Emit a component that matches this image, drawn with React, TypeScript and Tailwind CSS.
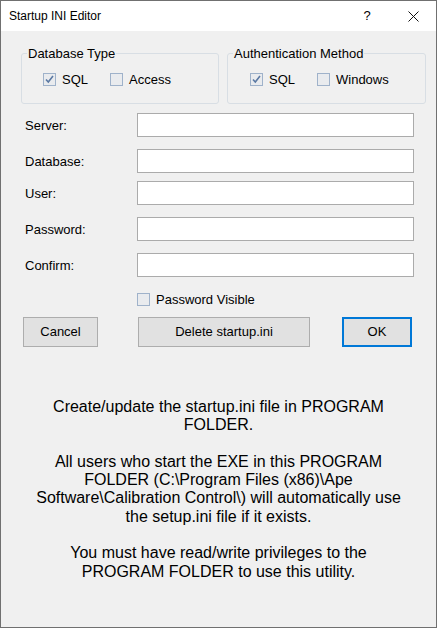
import React from "react";

function Check({ checked }: { checked?: boolean }) {
  return (
    <span className="w-[13px] h-[13px] shrink-0 border border-[#9fb2ca] bg-[#e9ebee] flex items-center justify-center">
      {checked && (
        <svg width="11" height="11" viewBox="0 0 11 11">
          <path d="M2 5.5 L4.3 8 L9 2" fill="none" stroke="#5b79a3" strokeWidth="1.6" />
        </svg>
      )}
    </span>
  );
}

function CheckItem({ label, checked, w }: { label: string; checked?: boolean; w?: string }) {
  return (
    <div className={`flex items-center gap-[6px] h-[15px] ${w ?? ""}`}>
      <Check checked={checked} />
      <span className="text-[13px] leading-[15px]">{label}</span>
    </div>
  );
}

function Field({ label, mt }: { label: string; mt: string }) {
  return (
    <div className={`flex items-center h-[24px] pl-[24px] ${mt}`}>
      <span className="w-[112px] text-[13px] leading-[15px]">{label}</span>
      <div className="w-[277px] h-[24px] bg-white border border-[#ababab]" />
    </div>
  );
}

export default function App() {
  return (
    <div className="w-[437px] h-[628px] bg-[#f0f0f0] border border-[#707070] flex flex-col font-['Liberation_Sans',Arial,sans-serif] text-black overflow-hidden">
      <div className="h-[30px] bg-white flex items-center shrink-0">
        <span className="pl-[8px] text-[12px] leading-[14px] flex-1">Startup INI Editor</span>
        <div className="w-[46px] h-full flex items-center justify-center text-[13px]">?</div>
        <div className="w-[46px] h-full flex items-center justify-center">
          <svg width="11" height="11" viewBox="0 0 11 11">
            <path d="M0.5 0.5 L10.5 10.5 M10.5 0.5 L0.5 10.5" stroke="#111" strokeWidth="1" />
          </svg>
        </div>
      </div>

      <div className="flex pl-[20px] mt-[15px] gap-[8px]">
        <fieldset className="w-[198px] border border-[#d8dee4] rounded-[3px] px-[5px] pb-[16px]">
          <legend className="px-[1px] text-[13px] leading-[15px]">Database Type</legend>
          <div className="flex mt-[11px] pl-[16px]">
            <CheckItem label="SQL" checked w="w-[67px]" />
            <CheckItem label="Access" />
          </div>
        </fieldset>
        <fieldset className="w-[199px] border border-[#d8dee4] rounded-[3px] px-[5px] pb-[16px]">
          <legend className="px-[1px] text-[13px] leading-[15px]">Authentication Method</legend>
          <div className="flex mt-[11px] pl-[17px]">
            <CheckItem label="SQL" checked w="w-[67px]" />
            <CheckItem label="Windows" />
          </div>
        </fieldset>
      </div>

      <Field label="Server:" mt="mt-[9px]" />
      <Field label="Database:" mt="mt-[12px]" />
      <Field label="User:" mt="mt-[8px]" />
      <Field label="Password:" mt="mt-[12px]" />
      <Field label="Confirm:" mt="mt-[12px]" />

      <div className="flex items-center h-[13px] pl-[136px] mt-[16px]">
        <CheckItem label="Password Visible" />
      </div>

      <div className="flex mt-[11px]">
        <button className="ml-[22px] w-[75px] h-[30px] bg-[#e1e1e1] border border-[#adadad] text-[13px]">Cancel</button>
        <button className="ml-[40px] w-[172px] h-[30px] bg-[#e1e1e1] border border-[#adadad] text-[13px]">Delete startup.ini</button>
        <button className="ml-[32px] w-[70px] h-[30px] bg-[#e1e1e1] border-2 border-[#0078d7] text-[13px]">OK</button>
      </div>

      <div className="mt-[51px] text-center text-[16px] leading-[18.3px] whitespace-nowrap">
        <p>Create/update the startup.ini file in PROGRAM<br />FOLDER.</p>
        <p className="mt-[18.3px]">
          All users who start the EXE in this PROGRAM<br />
          FOLDER (C:\Program Files (x86)\Ape<br />
          Software\Calibration Control\) will automatically use<br />
          the setup.ini file if it exists.
        </p>
        <p className="mt-[18.3px]">
          You must have read/write privileges to the<br />
          PROGRAM FOLDER to use this utility.
        </p>
      </div>
    </div>
  );
}
